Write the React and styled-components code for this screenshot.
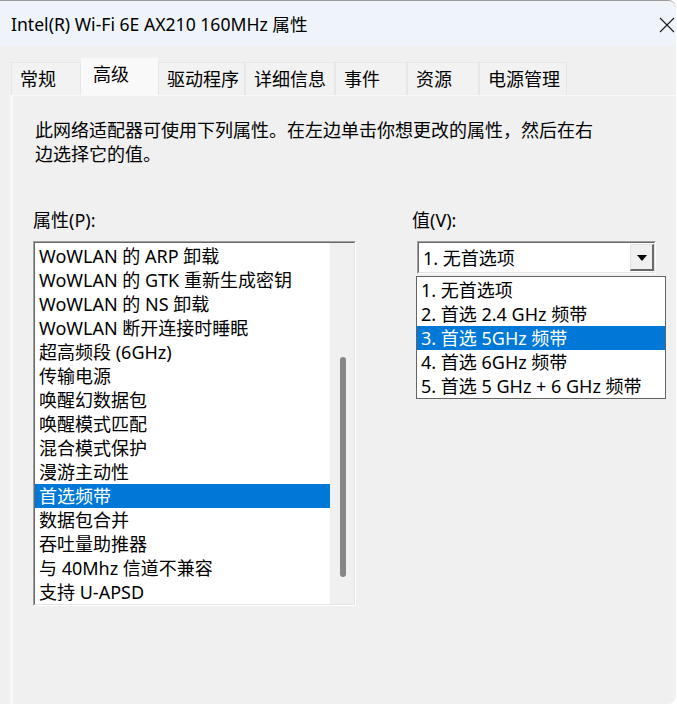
import React from 'react';
import styled, { createGlobalStyle } from 'styled-components';

const GlobalStyle = createGlobalStyle`
  html, body {
    margin: 0;
    padding: 0;
    background: #ffffff;
  }
  body {
    font-family: "Noto Sans", "Noto Sans CJK SC", sans-serif;
    font-size: 18px;
    color: #000;
  }
`;

const Window = styled.div`
  width: 676px;
  height: 704px;
  display: flex;
  flex-direction: column;
  box-sizing: border-box;
  border-top: 1px solid #9c9c9c;
  border-radius: 0 8px 8px 0;
  overflow: hidden;
  background: #f0f0f0;
`;

const TitleBar = styled.div`
  height: 45px;
  flex: none;
  display: flex;
  align-items: center;
  justify-content: space-between;
  padding: 0 1px 0 11px;
  background: #eef4f9;
  font-size: 17.6px;
  line-height: 24px;
`;

const CloseButton = styled.div`
  width: 16px;
  height: 16px;
  margin-top: 3px;
  display: flex;
`;

const Body = styled.div`
  flex: 1;
  display: flex;
  flex-direction: column;
  padding: 12px 0 0 10px;
`;

const TabRow = styled.div`
  display: flex;
  align-items: flex-end;
  margin: 0 0 -1px 1px;
  height: 38px;
`;

const Tab = styled.div`
  position: relative;
  box-sizing: border-box;
  width: ${(p) => p.$w}px;
  height: ${(p) => (p.$active ? 38 : 34)}px;
  padding: ${(p) => (p.$active ? '2px 0 0 11px' : '3px 0 0 8px')};
  line-height: 26px;
  background: ${(p) => (p.$active ? '#f9f9f9' : '#f2f2f2')};
  border: 1px solid ${(p) => (p.$active ? '#f9f9f9' : '#e7e7e7')};
  border-bottom: none;
  z-index: ${(p) => (p.$active ? 2 : 0)};
  white-space: nowrap;
`;

const Panel = styled.div`
  position: relative;
  flex: 1;
  border-top: 1px solid #f9f9f9;
  border-left: 3px solid #f8f8f8;
  padding: 22px 0 0 22px;
  z-index: 1;
`;

const Description = styled.p`
  margin: 0;
  line-height: 24px;
`;

const Columns = styled.div`
  display: flex;
  margin: 42px 0 0 -2px;
  gap: 54px;
`;

const Column = styled.div`
  position: relative;
  display: flex;
  flex-direction: column;
  width: ${(p) => p.$w}px;
`;

const FieldLabel = styled.div`
  line-height: 24px;
  margin: 0 0 9px ${(p) => p.$indent || 0}px;
`;

const ListBox = styled.div`
  height: 365px;
  display: flex;
  box-sizing: border-box;
  border-top: 1px solid #a0a0a0;
  border-left: 1px solid #a0a0a0;
  border-right: 1px solid #ffffff;
  border-bottom: 1px solid #ffffff;
`;

const ListInner = styled.div`
  flex: 1;
  display: flex;
  border-top: 1px solid #696969;
  border-left: 1px solid #696969;
  border-right: 1px solid #e3e3e3;
  border-bottom: 1px solid #e3e3e3;
`;

const ListItems = styled.div`
  flex: 1;
  background: #fff;
  padding-top: 1px;
`;

const Item = styled.div`
  height: 24px;
  line-height: 24px;
  padding-left: 4px;
  white-space: nowrap;
  background: ${(p) => (p.$selected ? '#0078d7' : 'transparent')};
  color: ${(p) => (p.$selected ? '#fff' : '#000')};
`;

const ScrollTrack = styled.div`
  width: 24px;
  background: #f0f0f0;
  display: flex;
  justify-content: center;
  padding-top: 114px;
  box-sizing: border-box;
`;

const ScrollThumb = styled.div`
  width: 6px;
  height: 220px;
  margin-left: 2px;
  border-radius: 3px;
  background: #868686;
`;

const Combo = styled.div`
  margin-left: 7px;
  width: 239px;
  height: 33px;
  box-sizing: border-box;
  display: flex;
  border-top: 1px solid #a0a0a0;
  border-left: 1px solid #a0a0a0;
  border-right: 1px solid #ffffff;
  border-bottom: 1px solid #ffffff;
`;

const ComboInner = styled.div`
  flex: 1;
  display: flex;
  align-items: center;
  justify-content: space-between;
  background: #fff;
  border-top: 1px solid #696969;
  border-left: 1px solid #696969;
  border-right: 1px solid #e3e3e3;
  border-bottom: 1px solid #e3e3e3;
  padding-left: 4px;
  line-height: 24px;
`;

const ComboButton = styled.div`
  width: 24px;
  height: 27px;
  box-sizing: border-box;
  display: flex;
  align-items: center;
  justify-content: center;
  background: #f0f0f0;
  border-top: 1px solid #e3e3e3;
  border-left: 1px solid #e3e3e3;
  border-right: 2px solid #696969;
  border-bottom: 2px solid #696969;
`;

const Arrow = styled.div`
  width: 0;
  height: 0;
  border-left: 5px solid transparent;
  border-right: 5px solid transparent;
  border-top: 6px solid #000;
  margin-top: 1px;
`;

const DropList = styled.div`
  position: absolute;
  top: 68px;
  left: 6px;
  width: 250px;
  box-sizing: border-box;
  border: 1px solid #646464;
  background: #fff;
  padding-top: 1px;
  z-index: 5;
`;

const tabs = [
  { label: '常规', w: 70 },
  { label: '高级', w: 77, active: true },
  { label: '驱动程序', w: 87 },
  { label: '详细信息', w: 90 },
  { label: '事件', w: 72 },
  { label: '资源', w: 72 },
  { label: '电源管理', w: 88 },
];

const properties = [
  'WoWLAN 的 ARP 卸载',
  'WoWLAN 的 GTK 重新生成密钥',
  'WoWLAN 的 NS 卸载',
  'WoWLAN 断开连接时睡眠',
  '超高频段 (6GHz)',
  '传输电源',
  '唤醒幻数据包',
  '唤醒模式匹配',
  '混合模式保护',
  '漫游主动性',
  '首选频带',
  '数据包合并',
  '吞吐量助推器',
  '与 40Mhz 信道不兼容',
  '支持 U-APSD',
];

const values = [
  '1. 无首选项',
  '2. 首选 2.4 GHz 频带',
  '3. 首选 5GHz 频带',
  '4. 首选 6GHz 频带',
  '5. 首选 5 GHz + 6 GHz 频带',
];

export default function App() {
  return (
    <>
      <GlobalStyle />
      <Window>
        <TitleBar>
          <span>Intel(R) Wi-Fi 6E AX210 160MHz 属性</span>
          <CloseButton>
            <svg width="16" height="16" viewBox="0 0 16 16">
              <path d="M1 1 L15 15 M15 1 L1 15" stroke="#1a1a1a" strokeWidth="1.1" fill="none" />
            </svg>
          </CloseButton>
        </TitleBar>
        <Body>
          <TabRow>
            {tabs.map((t) => (
              <Tab key={t.label} $w={t.w} $active={t.active}>
                {t.label}
              </Tab>
            ))}
          </TabRow>
          <Panel>
            <Description>
              此网络适配器可使用下列属性。在左边单击你想更改的属性，然后在右
              <br />
              边选择它的值。
            </Description>
            <Columns>
              <Column $w={323}>
                <FieldLabel>属性(P):</FieldLabel>
                <ListBox>
                  <ListInner>
                    <ListItems>
                      {properties.map((p) => (
                        <Item key={p} $selected={p === '首选频带'}>
                          {p}
                        </Item>
                      ))}
                    </ListItems>
                    <ScrollTrack>
                      <ScrollThumb />
                    </ScrollTrack>
                  </ListInner>
                </ListBox>
              </Column>
              <Column $w={260}>
                <FieldLabel $indent={2}>值(V):</FieldLabel>
                <Combo>
                  <ComboInner>
                    <span>1. 无首选项</span>
                    <ComboButton>
                      <Arrow />
                    </ComboButton>
                  </ComboInner>
                </Combo>
                <DropList>
                  {values.map((v) => (
                    <Item key={v} $selected={v.startsWith('3.')}>
                      {v}
                    </Item>
                  ))}
                </DropList>
              </Column>
            </Columns>
          </Panel>
        </Body>
      </Window>
    </>
  );
}
